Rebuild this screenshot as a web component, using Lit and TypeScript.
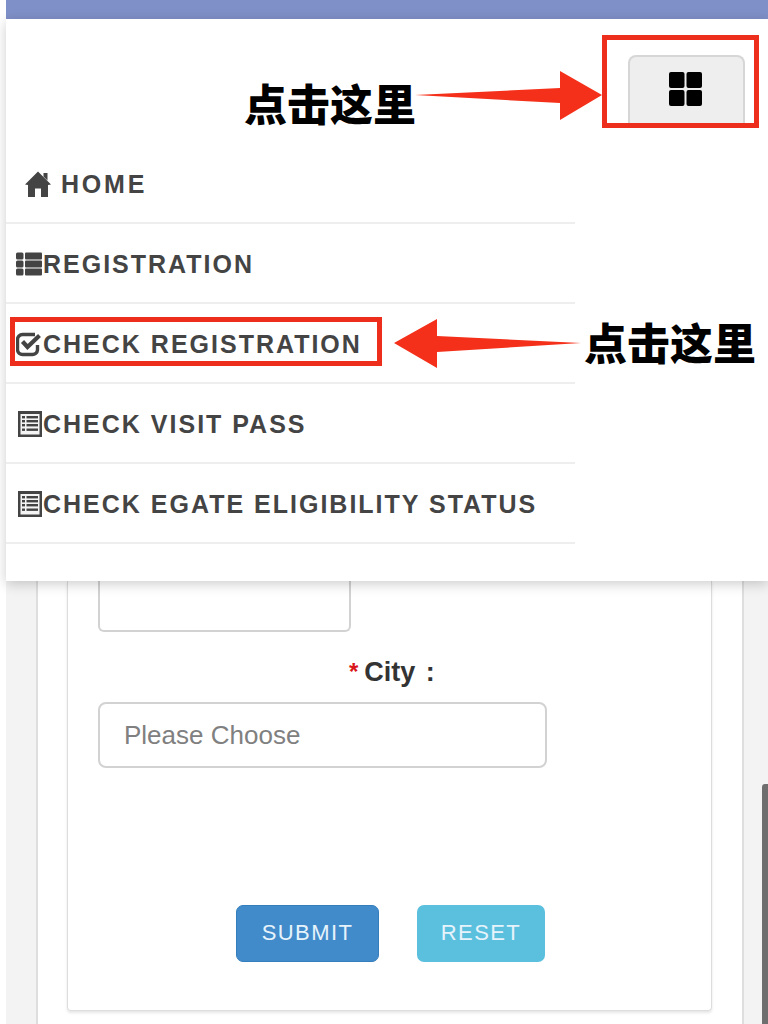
import { LitElement, html, svg, css } from 'lit';
import { customElement } from 'lit/decorators.js';

const ICON_HOME = html`<svg class="ico home" viewBox="0 0 26 26">
  <path d="M13 0.5 L26 13.5 L23 14 V26 H16 V17.5 H10 V26 H3 V14 L0 13.5 Z M18.5 2 H22.5 V9.5 L18.5 5.5 Z" fill="#444"/>
</svg>`;

const ICON_LIST = html`<svg class="ico" viewBox="0 0 27 26">
  ${[1.5, 9.5, 17.5].map((y) => svg`
    <rect x="0" y=${y} width="7.5" height="7" rx="1.5" fill="#444"/>
    <rect x="9" y=${y} width="17" height="7" rx="1" fill="#444"/>`)}
</svg>`;

const ICON_CHECK = html`<svg class="ico" viewBox="0 0 27 26">
  <path d="M21.5 14 V19 A5 5 0 0 1 16.5 23.5 H6.5 A5 5 0 0 1 1.5 19 V8.5 A5 5 0 0 1 6.5 3.5 H19" fill="none" stroke="#444" stroke-width="3.4"/>
  <path d="M6.5 10.5 L11.5 16 L23.5 4.5" fill="none" stroke="#444" stroke-width="4.2"/>
</svg>`;

const ICON_ALT = html`<svg class="ico" viewBox="0 0 27 26">
  <rect x="2" y="0" width="24" height="26" fill="#444"/>
  <rect x="4.5" y="3" width="19" height="20.5" fill="#f4f4f4"/>
  ${[5, 9, 13, 17.5].map((y) => svg`
    <rect x="6" y=${y} width="3" height="2.4" fill="#444"/>
    <rect x="10.5" y=${y} width="11.5" height="2.4" fill="#444"/>`)}
</svg>`;

const NAV = [
  { label: 'HOME', icon: ICON_HOME, cls: 'first' },
  { label: 'REGISTRATION', icon: ICON_LIST, cls: '' },
  { label: 'CHECK REGISTRATION', icon: ICON_CHECK, cls: '' },
  { label: 'CHECK VISIT PASS', icon: ICON_ALT, cls: '' },
  { label: 'CHECK EGATE ELIGIBILITY STATUS', icon: ICON_ALT, cls: '' },
];

@customElement('app-root')
export class AppRoot extends LitElement {
  static styles = css`
    :host {
      display: block;
      position: relative;
      width: 768px;
      height: 1024px;
      overflow: hidden;
      background: #fff;
      font-family: 'Liberation Sans', Arial, sans-serif;
    }
    .topbar {
      height: 19px;
      margin-left: 6px;
      background: #7f90c8;
    }
    .menu {
      position: relative;
      z-index: 1;
      margin-left: 6px;
      height: 562px;
      background: #fff;
      box-shadow: 0 3px 12px rgba(0, 0, 0, 0.2);
    }
    .toggle-row {
      display: flex;
      justify-content: flex-end;
      height: 125px;
      padding: 36px 23px 0 0;
      box-sizing: border-box;
    }
    .toggle {
      display: flex;
      align-items: center;
      justify-content: center;
      width: 117px;
      height: 69px;
      box-sizing: border-box;
      padding: 0 2px 3px 0;
      background: #eee;
      border: 2px solid #d6d6d6;
      border-bottom: none;
      border-radius: 8px 8px 0 0;
    }
    .toggle svg { width: 33px; height: 34px; display: block; }
    .nav { width: 569px; }
    .nav-item {
      display: flex;
      align-items: center;
      height: 80px;
      box-sizing: border-box;
      padding: 2px 0 0 10px;
      border-bottom: 2px solid #eee;
      color: #444;
      font-size: 25px;
      font-weight: 700;
      letter-spacing: 2px;
      white-space: nowrap;
    }
    .nav-item.first { padding-left: 19px; letter-spacing: 2.8px; }
    .ico { width: 27px; height: 26px; display: block; flex: none; }
    .ico.home { width: 26px; margin-right: 10px; }
    .page {
      display: flex;
      height: 443px;
      margin-left: 6px;
      background: #f3f3f3;
    }
    .panel {
      margin-left: 30px;
      width: 708px;
      box-sizing: border-box;
      padding: 0 30px 0 29px;
      background: #fff;
      border-left: 2px solid #dedede;
      border-right: 2px solid #dedede;
    }
    .card {
      height: 430px;
      box-sizing: border-box;
      padding-left: 30px;
      border: 1px solid #ddd;
      border-top: none;
      border-radius: 0 0 4px 4px;
      box-shadow: 0 2px 3px rgba(0, 0, 0, 0.1);
    }
    .stub {
      width: 253px;
      height: 51px;
      box-sizing: border-box;
      border: 2px solid #d2d2d2;
      border-top: none;
      border-radius: 0 0 6px 6px;
    }
    .label {
      display: flex;
      align-items: center;
      height: 70px;
      box-sizing: border-box;
      padding: 10px 0 0 251px;
      color: #333;
      font-size: 27px;
      font-weight: 700;
      word-spacing: 3px;
    }
    .label b { color: #d9161c; margin-right: 6px; font-size: 24px; }
    .input {
      display: flex;
      align-items: center;
      width: 449px;
      height: 66px;
      box-sizing: border-box;
      padding-left: 24px;
      border: 2px solid #d2d2d2;
      border-radius: 8px;
      color: #808080;
      font-size: 26px;
    }
    .actions {
      display: flex;
      gap: 38px;
      margin-top: 137px;
      padding-left: 138px;
    }
    .btn {
      display: flex;
      align-items: center;
      justify-content: center;
      height: 57px;
      box-sizing: border-box;
      padding-bottom: 2px;
      border-radius: 7px;
      color: #e6f3fb;
      font-size: 22px;
      letter-spacing: 1.4px;
    }
    .submit { width: 143px; background: #428bca; border: 1px solid #357ebd; }
    .reset { width: 128px; background: #5bc0de; }
    .scrollbar {
      position: absolute;
      right: 0;
      top: 784px;
      bottom: 0;
      width: 6px;
      border-radius: 3px 0 0 0;
      background: #6e6e6e;
    }
    .marks {
      position: absolute;
      z-index: 2;
      inset: 0;
      width: 768px;
      height: 1024px;
      pointer-events: none;
    }
    .note {
      position: absolute;
      z-index: 3;
      color: #000;
      font-family: 'Noto Sans CJK SC', sans-serif;
      font-size: 43px;
      font-weight: 900;
      line-height: 1;
      white-space: nowrap;
    }
    .note.one { left: 244px; top: 81px; }
    .note.two { left: 584px; top: 320px; }
  `;

  render() {
    return html`
      <div class="topbar"></div>
      <div class="menu">
        <div class="toggle-row">
          <div class="toggle">
            <svg viewBox="0 0 33 34">
              <rect x="0" y="0" width="15.5" height="16" rx="2" fill="#000"/>
              <rect x="17.5" y="0" width="15.5" height="16" rx="2" fill="#000"/>
              <rect x="0" y="18" width="15.5" height="16" rx="2" fill="#000"/>
              <rect x="17.5" y="18" width="15.5" height="16" rx="2" fill="#000"/>
            </svg>
          </div>
        </div>
        <div class="nav">
          ${NAV.map((n) => html`
            <div class="nav-item ${n.cls}">${n.icon}<span>${n.label}</span></div>
          `)}
        </div>
      </div>
      <div class="page">
        <div class="panel">
          <div class="card">
            <div class="stub"></div>
            <div class="label"><b>*</b><span>City :</span></div>
            <div class="input">Please Choose</div>
            <div class="actions">
              <div class="btn submit">SUBMIT</div>
              <div class="btn reset">RESET</div>
            </div>
          </div>
        </div>
      </div>
      <div class="scrollbar"></div>

      <svg class="marks" viewBox="0 0 768 1024">
        <rect x="604.5" y="37.5" width="152" height="88" fill="none" stroke="#ee2e1c" stroke-width="5"/>
        <rect x="12.5" y="319.5" width="367" height="44" fill="none" stroke="#ee2e1c" stroke-width="5"/>
        <path d="M415 95 L560 88 V71 L602 95 L560 120 V103 Z" fill="#f5301a"/>
        <path d="M581 343 L437 336 V319 L394 343 L437 368 V352 Z" fill="#f5301a"/>
      </svg>
      <span class="note one">点击这里</span>
      <span class="note two">点击这里</span>
    `;
  }
}
